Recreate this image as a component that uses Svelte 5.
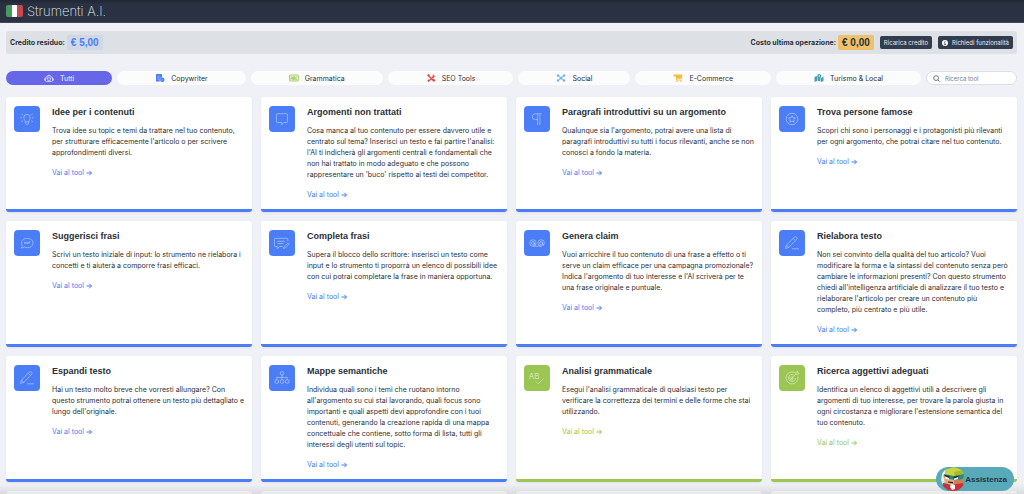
<script lang="ts">
  type Category = { id: string; label: string; icon: string; color: string };
  type Tool = { title: string; text: string; icon: string; category?: string };

  const categories: Category[] = [
    { id: 'all', label: 'Tutti', icon: 'robot', color: '#ffffff' },
    { id: 'copy', label: 'Copywriter', icon: 'document', color: '#4a7df6' },
    { id: 'grammar', label: 'Grammatica', icon: 'abc', color: '#9bc653' },
    { id: 'seo', label: 'SEO Tools', icon: 'tools', color: '#e04b43' },
    { id: 'social', label: 'Social', icon: 'network', color: '#6fb6e8' },
    { id: 'shop', label: 'E-Commerce', icon: 'cart', color: '#f3bd3f' },
    { id: 'local', label: 'Turismo & Local', icon: 'map', color: '#469fb0' }
  ];

  const tools: Tool[] = [
    {
      title: 'Idee per i contenuti',
      text: "Trova idee su topic e temi da trattare nel tuo contenuto, per strutturare efficacemente l'articolo o per scrivere approfondimenti diversi.",
      icon: 'bulb'
    },
    {
      title: 'Argomenti non trattati',
      text: "Cosa manca al tuo contenuto per essere davvero utile e centrato sul tema? Inserisci un testo e fai partire l'analisi: l'AI ti indicherà gli argomenti centrali e fondamentali che non hai trattato in modo adeguato e che possono rappresentare un 'buco' rispetto ai testi dei competitor.",
      icon: 'message'
    },
    {
      title: 'Paragrafi introduttivi su un argomento',
      text: "Qualunque sia l'argomento, potrai avere una lista di paragrafi introduttivi su tutti i focus rilevanti, anche se non conosci a fondo la materia.",
      icon: 'pilcrow'
    },
    {
      title: 'Trova persone famose',
      text: 'Scopri chi sono i personaggi e i protagonisti più rilevanti per ogni argomento, che potrai citare nel tuo contenuto.',
      icon: 'star'
    },
    {
      title: 'Suggerisci frasi',
      text: 'Scrivi un testo iniziale di input: lo strumento ne rielabora i concetti e ti aiuterà a comporre frasi efficaci.',
      icon: 'chat'
    },
    {
      title: 'Completa frasi',
      text: 'Supera il blocco dello scrittore: inserisci un testo come input e lo strumento ti proporrà un elenco di possibili idee con cui potrai completare la frase in maniera opportuna.',
      icon: 'form'
    },
    {
      title: 'Genera claim',
      text: "Vuoi arricchire il tuo contenuto di una frase a effetto o ti serve un claim efficace per una campagna promozionale? Indica l'argomento di tuo interesse e l'AI scriverà per te una frase originale e puntuale.",
      icon: 'quote'
    },
    {
      title: 'Rielabora testo',
      text: "Non sei convinto della qualità del tuo articolo? Vuoi modificare la forma e la sintassi del contenuto senza però cambiare le informazioni presenti? Con questo strumento chiedi all'intelligenza artificiale di analizzare il tuo testo e rielaborare l'articolo per creare un contenuto più completo, più centrato e più utile.",
      icon: 'pencil'
    },
    {
      title: 'Espandi testo',
      text: "Hai un testo molto breve che vorresti allungare? Con questo strumento potrai ottenere un testo più dettagliato e lungo dell'originale.",
      icon: 'pencil'
    },
    {
      title: 'Mappe semantiche',
      text: "Individua quali sono i temi che ruotano intorno all'argomento su cui stai lavorando, quali focus sono importanti e quali aspetti devi approfondire con i tuoi contenuti, generando la creazione rapida di una mappa concettuale che contiene, sotto forma di lista, tutti gli interessi degli utenti sul topic.",
      icon: 'sitemap'
    },
    {
      title: 'Analisi grammaticale',
      text: "Esegui l'analisi grammaticale di qualsiasi testo per verificare la correttezza dei termini e delle forme che stai utilizzando.",
      icon: 'spellcheck',
      category: 'grammar'
    },
    {
      title: 'Ricerca aggettivi adeguati',
      text: "Identifica un elenco di aggettivi utili a descrivere gli argomenti di tuo interesse, per trovare la parola giusta in ogni circostanza e migliorare l'estensione semantica del tuo contenuto.",
      icon: 'target',
      category: 'grammar'
    }
  ];

  let active = $state('all');
  let query = $state('');

  let visible = $derived(
    tools.filter(
      (t) =>
        (active === 'all' || (t.category ?? 'copy') === active) &&
        t.title.toLowerCase().includes(query.toLowerCase())
    )
  );
</script>

{#snippet tabIcon(name: string)}
  <svg class="tab-icon" viewBox="0 0 20 16" aria-hidden="true">
    {#if name === 'robot'}
      <g fill="none" stroke="currentColor" stroke-width="1.3">
        <path d="M5 6h10a2 2 0 0 1 2 2v5a2 2 0 0 1-2 2H5a2 2 0 0 1-2-2V8a2 2 0 0 1 2-2zM6 5l2-2.500h4L14 5M1 9v4M19 9v4M7 12.500h6" />
        <circle cx="7" cy="9.500" r="1" />
        <circle cx="13" cy="9.500" r="1" />
      </g>
    {:else if name === 'document'}
      <path fill="currentColor" d="M3 0h10a1 1 0 0 1 1 1v6a5 5 0 0 0-4 8H3a1 1 0 0 1-1-1V1a1 1 0 0 1 1-1z" />
      <path stroke="#b9cdfc" stroke-width="1" d="M4.500 4.500h6M4.500 7.500h5M4.500 10.500h4" />
      <circle cx="14.500" cy="11.500" r="4.500" fill="currentColor" />
      <path stroke="#b9cdfc" stroke-width="1" fill="none" d="M12.500 11.500l1.500 1.500 2.500-3" />
    {:else if name === 'abc'}
      <rect x="1" y="2" width="18" height="12" rx="1" fill="#e6f2d0" stroke="currentColor" stroke-width="1.500" />
      <path fill="none" stroke="currentColor" stroke-width="1.400" d="M4 11V6.500l1-1h1l1 1V11M4 9h3M9 11V5.500h2v5.500H9M9 8h2M16 6h-2.500v5H16" />
    {:else if name === 'tools'}
      <path fill="none" stroke="currentColor" stroke-width="2.600" d="M4 2l12 12.500M15.500 5L5 14.500" />
      <path fill="currentColor" d="M2 2.500L4.500 0l3 3-2.500 2.500zM13 3l3-2.500-.5 3 3-.5-2 3.500-3 .5zM13 11l2-2 4 4-2.500 2.500zM3 12l3-1 1 3-3 2z" />
    {:else if name === 'network'}
      <path fill="none" stroke="currentColor" stroke-width="2" d="M4 3l12 10M16 3L4 13" />
      <g fill="currentColor">
        <circle cx="10" cy="8" r="3" />
        <circle cx="4" cy="3" r="2.500" />
        <circle cx="16" cy="3" r="2.500" />
        <circle cx="4" cy="13" r="2.500" />
        <circle cx="16" cy="13" r="2.500" />
      </g>
    {:else if name === 'cart'}
      <path fill="currentColor" d="M1 1h18l-1.500 8.500H7L6 5H1z" />
      <path fill="none" stroke="currentColor" stroke-width="1.800" d="M6 3l1.500 9H17" />
      <circle cx="8" cy="14" r="1.700" fill="currentColor" />
      <circle cx="16" cy="14" r="1.700" fill="currentColor" />
    {:else}
      <path fill="currentColor" d="M1 6l5-2v10l-5 2zM7 5l6 4v6l-6-1.500zM14 8l5-3v9l-5 2z" />
      <path fill="currentColor" d="M10.500 0a4 4 0 0 1 4 4c0 2.500-4 7-4 7s-4-4.500-4-7a4 4 0 0 1 4-4z" />
      <circle cx="10.500" cy="4" r="1.400" fill="#fff" />
    {/if}
  </svg>
{/snippet}

{#snippet toolIcon(name: string)}
  <svg viewBox="0 0 24 24" aria-hidden="true">
    {#if name === 'bulb'}
      <path d="M9 17c0-3-2.500-4-2.500-7.500a5.500 5.500 0 0 1 11 0C17.500 13 15 14 15 17zM9 17v2l1.500 2h3l1.500-2v-2M.500 10h3M20.500 10h3M2 3l3 2M22 3l-3 2M2 17l3-2M22 17l-3-2" />
    {:else if name === 'message'}
      <path d="M4 3h16a1.500 1.500 0 0 1 1.500 1.500v12A1.500 1.500 0 0 1 20 18h-5l-3.500 4V18H4a1.500 1.500 0 0 1-1.500-1.500v-12A1.500 1.500 0 0 1 4 3z" />
    {:else if name === 'pilcrow'}
      <path d="M20 3H9a5 5 0 0 0 0 10h4M13 3v18M17 3v18M12 21h2M16 21h2" />
    {:else if name === 'star'}
      <circle cx="12" cy="12" r="10" />
      <path d="M12 6l1.800 3.900 4.200.500-3.100 2.900.800 4.200-3.700-2.100-3.700 2.100.800-4.200L6 10.400l4.200-.500z" />
    {:else if name === 'chat'}
      <path d="M2 20.500c1.500-1 2-2 2-3.500-1-1.500-1.500-3-1.500-5C2.500 7 7 4 12.500 4S22.500 7 22.500 12s-4.500 8-10 8c-2 0-3.500-.500-5-1-1.500 1-3.500 1.500-5.500 1.500z" />
      <path d="M8 10v3M8 13h2M10 10v3M12 10v3M12 13h2M14 10v3M16 10l2 0M16 10v3" />
    {:else if name === 'form'}
      <path d="M22 9V5.500A1.500 1.500 0 0 0 20.500 4h-20A1.500 1.500 0 0 0-1 5.500v11A1.500 1.500 0 0 0 .500 18H4v3.500L8 18h5M4 9h13M4 13h10M15.500 18.500l7-7 2 2-7 7-3 1z" />
    {:else if name === 'quote'}
      <circle cx="5" cy="12" r="5.500" />
      <circle cx="19" cy="12" r="5.500" />
      <circle cx="5" cy="12" r="2.500" />
      <circle cx="19" cy="12" r="2.500" />
      <path d="M5 17.500h14M7.500 12v2.500h2.500M21.500 12v2.500h2.500" />
    {:else if name === 'pencil'}
      <path d="M1 21.500l1.500-6L16 2a2.400 2.400 0 0 1 3.800 3.800L6.500 19.500zM14 4l3.800 3.800M2.500 15.500l4 4M12 22h12" />
    {:else if name === 'sitemap'}
      <circle cx="12" cy="4" r="3" />
      <path d="M12 7v8M3 15v-4h18v4" />
      <rect x="0" y="15" width="6" height="6" rx="2" />
      <rect x="9" y="15" width="6" height="6" rx="2" />
      <rect x="18" y="15" width="6" height="6" rx="2" />
    {:else if name === 'spellcheck'}
      <text x="-2" y="13">AB</text>
      <path d="M10 18l4 4 9-9" />
    {:else}
      <path d="M22 9.500a10.300 10.300 0 1 1-4-6M18 12a6 6 0 1 1-3-5.200M12 12l6.500-6.500V2.500l3-2v3h3l-2.500 2.500h-3.500M5 12h4M12 14v4M8 16l3-3" />
      <circle cx="12" cy="12" r="2" />
    {/if}
  </svg>
{/snippet}

<div class="page">
  <header class="topbar">
    <svg class="flag" viewBox="0 0 17 12" role="img" aria-label="Italiano">
      <path fill="#479a5f" d="M2 0h4v12H2a2 2 0 0 1-2-2V2a2 2 0 0 1 2-2z" />
      <path fill="#fff" d="M6 0h5v12H6z" />
      <path fill="#c9494a" d="M11 0h4a2 2 0 0 1 2 2v8a2 2 0 0 1-2 2h-4z" />
    </svg>
    <h1>Strumenti A.I.</h1>
  </header>

  <main>
    <section class="credit">
      <span>Credito residuo:</span>
      <strong class="amount">€ 5,00</strong>
      <span class="last">Costo ultima operazione:</span>
      <strong class="amount cost">€ 0,00</strong>
      <button class="action" type="button">Ricarica credito</button>
      <button class="action" type="button">
        <svg viewBox="0 0 12 12" aria-hidden="true">
          <circle cx="6" cy="6" r="6" fill="#fff" />
          <path d="M6 2.200v1.800M4.500 5.500H6v4M4.500 9.300h3" stroke="#323c4f" stroke-width="1.500" fill="none" />
        </svg>
        Richiedi funzionalità
      </button>
    </section>

    <nav class="filters">
      {#each categories as category (category.id)}
        <button
          type="button"
          class="tab"
          class:active={active === category.id}
          onclick={() => (active = category.id)}
        >
          <span class="tab-mark" style="color: {category.color}">{@render tabIcon(category.icon)}</span>
          {category.label}
        </button>
      {/each}
      <label class="search">
        <svg viewBox="0 0 16 16" aria-hidden="true">
          <circle cx="7" cy="7" r="5.500" />
          <path d="M11 11l4 4" />
        </svg>
        <input type="text" placeholder="Ricerca tool" aria-label="Ricerca tool" bind:value={query} />
      </label>
    </nav>

    <div class="grid">
      {#each visible as tool (tool.title)}
        <article class="card" class:grammar={tool.category === 'grammar'}>
          <div class="badge">{@render toolIcon(tool.icon)}</div>
          <div class="body">
            <h2>{tool.title}</h2>
            <p>{tool.text}</p>
            <a href="#tool">
              Vai al tool
              <svg viewBox="0 0 12 12" aria-hidden="true">
                <path d="M1 6h10M6.500 1.500L11 6l-4.500 4.500" />
              </svg>
            </a>
          </div>
        </article>
      {/each}
      {#each [1, 2, 3, 4] as n (n)}
        <div class="card loading"></div>
      {/each}
    </div>
  </main>

  <div class="fade"></div>

  <button class="help" type="button">
    <svg viewBox="0 0 24 24" aria-hidden="true">
      <clipPath id="face"><circle cx="12" cy="12" r="12" /></clipPath>
      <g clip-path="url(#face)">
        <path fill="#58a9b9" d="M0 0h24v24H0z" />
        <path fill="#f0ece4" d="M1 4l4-3 2 9-5 8-2-4z" />
        <path fill="#c9d53a" d="M4 3l9-3 9 3 1 6-9 1-10-3z" />
        <path fill="#a9b92c" d="M13 5l9-2 1 6-9 1z" />
        <path fill="#e9a77d" d="M2 8l11 2v9l-9-3z" />
        <path fill="#c77f5c" d="M13 10l10-2-1 9-9 3z" />
        <path fill="#2b8a78" d="M3 7l10 2 10-2-1 5-9 1-9-2z" />
        <path fill="#fff" d="M4 9.500l4 1v2l-4-1zM13 11l4-1v2l-4 1z" />
        <path fill="#222" d="M3 7.500l6 2-1 1.500-4-2zM18 8.500l-6 1.500 1 1.500 4-1.500zM7 14.500l5 .500v1.500l-5-1z" />
        <path fill="#cf2e35" d="M2 16l8 2 12-2 2 8H2z" />
        <path fill="#fff" d="M10 17l4 1v4l-3 1-2-3z" />
      </g>
    </svg>
    Assistenza
  </button>
</div>

<style>
  :global(body) {
    margin: 0;
    background: #f0f1f6;
  }

  .page {
    height: 100vh;
    overflow: hidden;
    font-family: Inter, 'Liberation Sans', sans-serif;
    font-size: 7px;
    line-height: 11px;
    color: #2b2f36;
  }

  button,
  input {
    font: inherit;
    color: inherit;
    border: none;
    margin: 0;
    padding: 0;
  }

  button {
    cursor: pointer;
  }

  .topbar {
    display: flex;
    align-items: center;
    gap: 4px;
    height: 23px;
    padding: 0 6px;
    box-sizing: border-box;
    background: linear-gradient(#1f2735, #293143 4px);
    border-bottom: 1px solid #3f4858;
  }

  .flag {
    width: 17px;
    height: 12px;
  }

  h1 {
    margin: 0;
    font-size: 13px;
    line-height: 20px;
    font-weight: 200;
    color: #e3e6ec;
  }

  main {
    padding: 8px 7px 0 6px;
  }

  .credit {
    display: flex;
    align-items: center;
    gap: 6px;
    height: 23px;
    padding: 0 4px;
    border-radius: 3px;
    background: #dde0e4;
    font-weight: 700;
  }

  .credit span {
    margin-right: -4px;
  }

  .last {
    margin-left: auto;
  }

  .amount {
    padding: 0 4px;
    border-radius: 2px;
    background: #d0d7e6;
    font-family: 'Liberation Sans', sans-serif;
    font-size: 10px;
    line-height: 15px;
    color: #4a7df6;
  }

  .cost {
    background: #eec26b;
    color: #2b2f36;
  }

  .action {
    display: flex;
    align-items: center;
    gap: 4px;
    height: 13px;
    padding: 0 4px;
    border-radius: 2px;
    background: #323c4f;
    font-size: 6px;
    font-weight: 400;
    color: #e8eaee;
  }

  .action svg {
    width: 6px;
    height: 6px;
  }

  .filters {
    display: flex;
    gap: 5px;
    margin: 17px 0 12px;
  }

  .tab {
    display: flex;
    flex: 1 1 auto;
    align-items: center;
    justify-content: center;
    gap: 6px;
    height: 14px;
    border-radius: 7px;
    background: #fcfcfd;
  }

  .tab.active {
    background: #6567e8;
    color: #f2f2ff;
  }

  .tab-mark {
    display: flex;
  }

  .tab-icon {
    width: 10px;
    height: 8px;
  }

  .search {
    display: flex;
    align-items: center;
    gap: 5px;
    width: 91px;
    height: 14px;
    padding: 0 6px;
    box-sizing: border-box;
    border: 1px solid #dcdfe5;
    border-radius: 7px;
    background: #fff;
    font-size: 6px;
  }

  .search svg {
    flex: none;
    width: 7px;
    height: 7px;
    fill: none;
    stroke: #5d636d;
    stroke-width: 2;
  }

  .search input {
    width: 100%;
    min-width: 0;
    background: none;
    outline: none;
  }

  .search input::placeholder {
    color: #777c85;
    opacity: 1;
  }

  .grid {
    display: grid;
    grid-template-columns: repeat(4, minmax(0, 1fr));
    gap: 9px;
  }

  .card {
    --accent: #4a7df6;
    display: flex;
    gap: 12px;
    padding: 9px 6px 9px 8px;
    border-bottom: 3px solid var(--accent);
    border-radius: 3px;
    background: #fff;
    box-shadow: 0 1px 2px rgba(40, 50, 80, 0.08);
  }

  .card.grammar {
    --accent: #9bc653;
  }

  .card.loading {
    height: 90px;
  }

  .badge {
    display: flex;
    flex: none;
    align-items: center;
    justify-content: center;
    width: 26px;
    height: 26px;
    border-radius: 4px;
    background: var(--accent);
  }

  .badge svg {
    width: 14px;
    height: 14px;
    overflow: visible;
    fill: none;
    stroke: #fff;
    stroke-width: 1;
    opacity: 0.7;
  }

  .badge text {
    font-size: 14px;
    font-weight: 300;
    fill: #fff;
    stroke: none;
  }

  .body {
    flex: 1;
    min-width: 0;
  }

  h2 {
    margin: 0 0 7px;
    font-family: 'Liberation Sans', sans-serif;
    font-size: 9px;
    line-height: 12px;
    font-weight: 700;
  }

  p {
    margin: 0 0 9px;
  }

  a {
    display: flex;
    align-items: center;
    gap: 2px;
    color: var(--accent);
    text-decoration: none;
  }

  a svg {
    width: 6px;
    height: 6px;
    fill: none;
    stroke: currentColor;
    stroke-width: 2;
  }

  .fade {
    position: fixed;
    right: 0;
    bottom: 0;
    left: 0;
    height: 10px;
    background: linear-gradient(rgba(90, 90, 95, 0), rgba(90, 90, 95, 0.14));
    pointer-events: none;
  }

  .help {
    position: fixed;
    right: 10px;
    bottom: 3px;
    display: flex;
    align-items: center;
    height: 24px;
    padding: 0 7px 0 5px;
    border-radius: 12px;
    background: #58a9b9;
    font-family: 'Liberation Sans', sans-serif;
    font-size: 8px;
    font-weight: 700;
    color: #22353f;
  }

  .help svg {
    width: 24px;
    height: 24px;
  }
</style>
